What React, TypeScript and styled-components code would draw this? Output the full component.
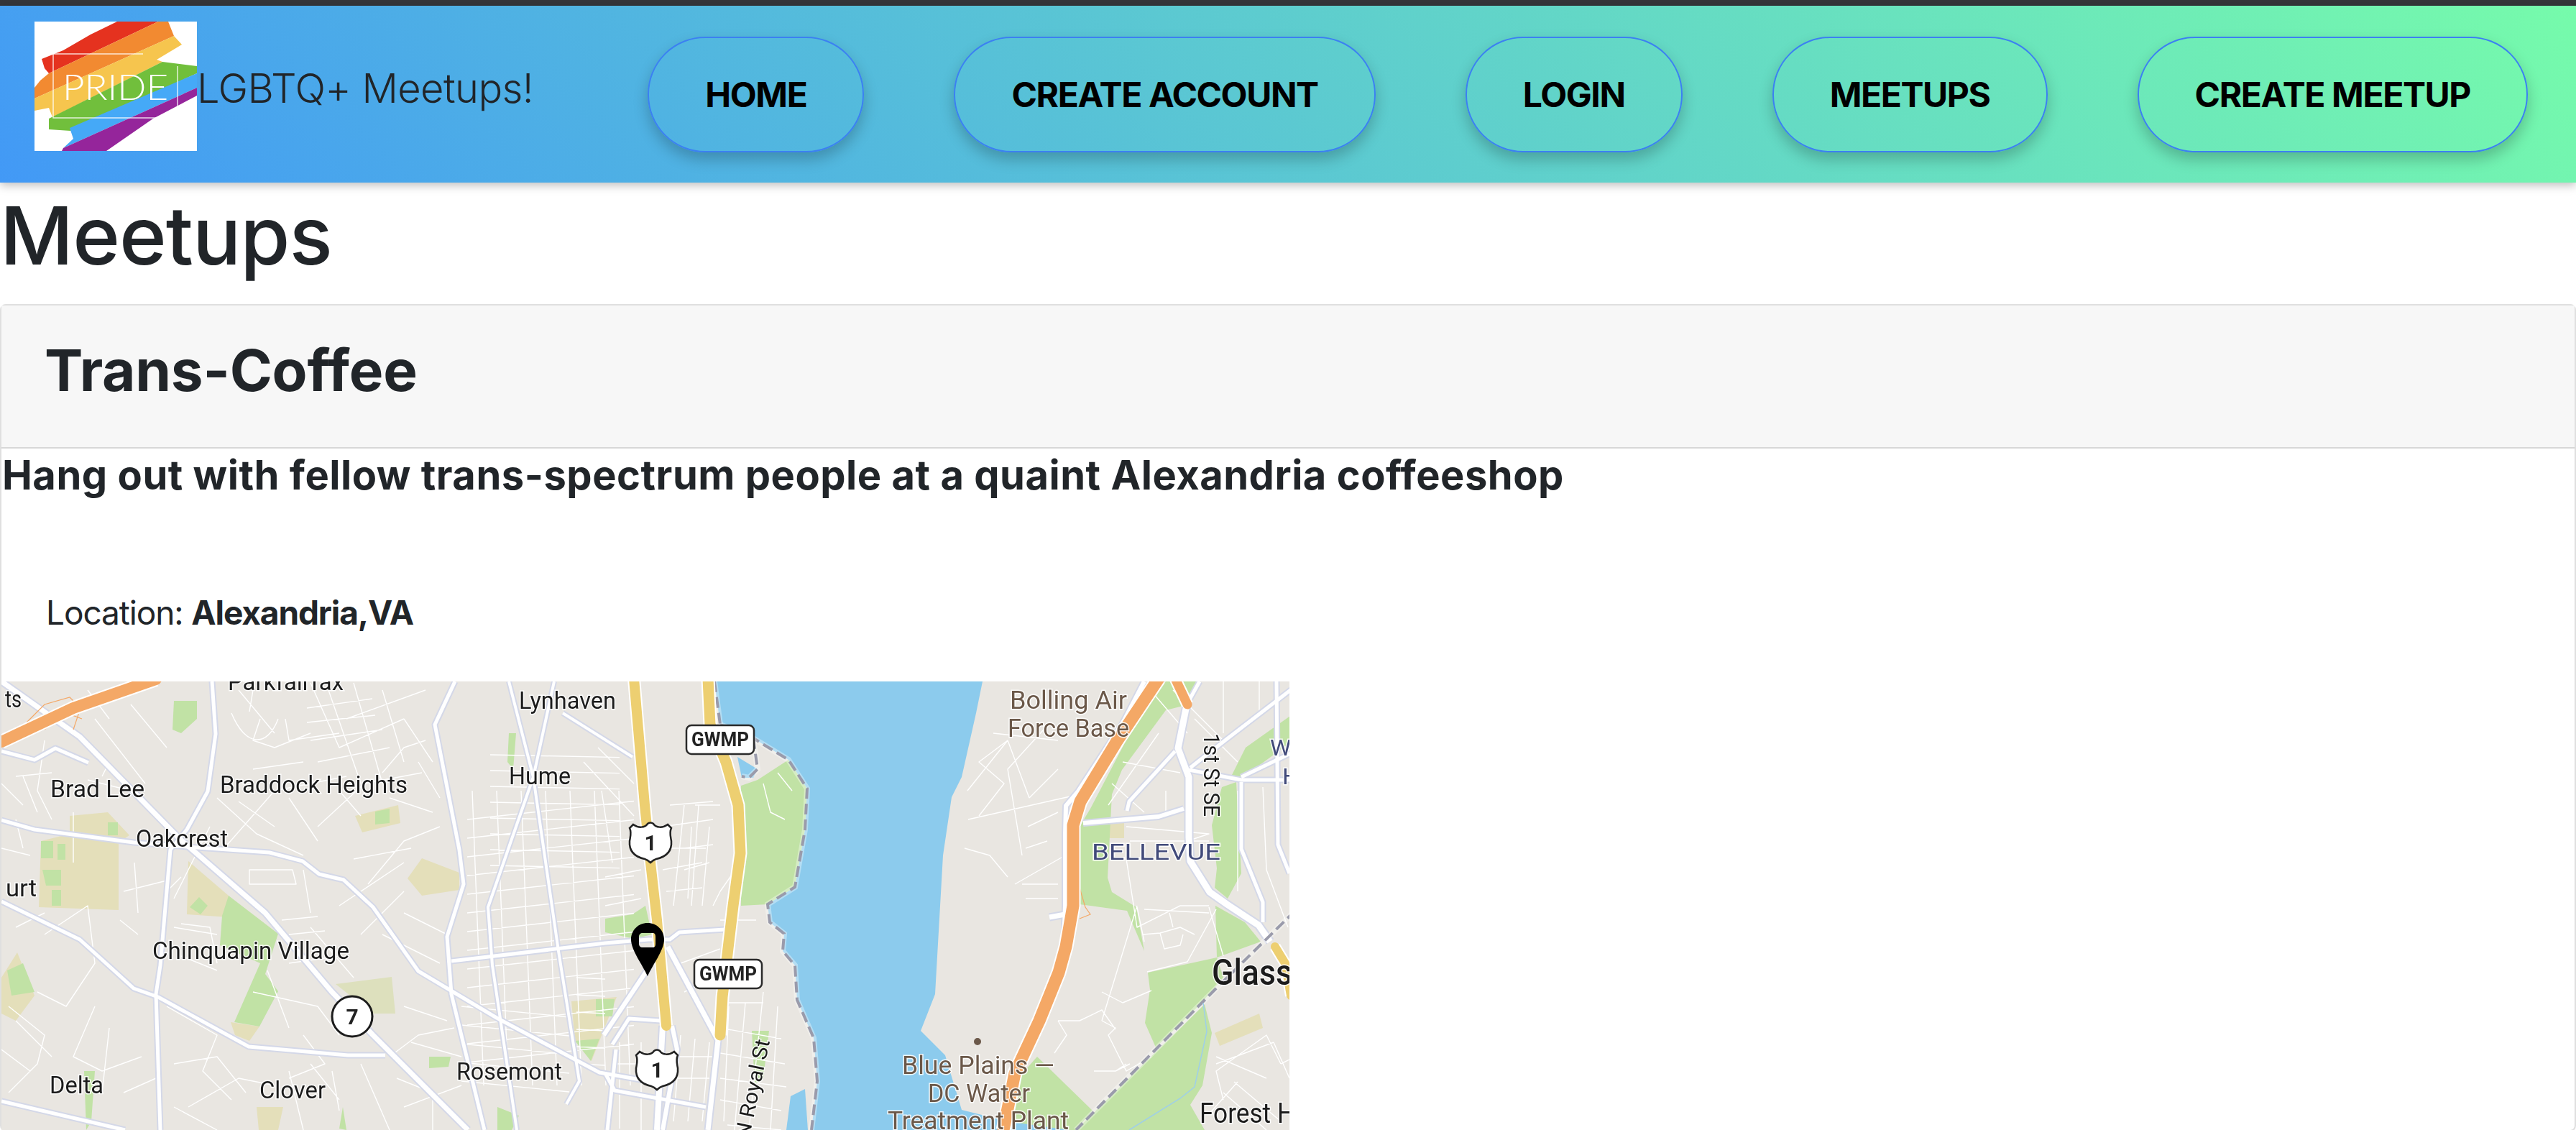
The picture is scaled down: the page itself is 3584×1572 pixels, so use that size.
import { FC } from 'react'
import styled, { createGlobalStyle } from 'styled-components'

const GlobalStyle = createGlobalStyle`
  html, body {
    margin: 0;
    height: 1572px;
    overflow: hidden;
    background: #fff;
    color: #212529;
    font-family: Inter, "Liberation Sans", sans-serif;
  }
  * {
    box-sizing: border-box;
  }
`

const navLinks = ['HOME', 'CREATE ACCOUNT', 'LOGIN', 'MEETUPS', 'CREATE MEETUP']

const Logo: FC = () => (
  <StyledLogo viewBox="0 0 226 180" aria-label="Pride">
    <rect width="226" height="180" fill="#fff" />
    <polygon points="115,0 172,0 20,72 14,65 10,52 40,40 78,18" fill="#e5321f" />
    <polygon points="172,0 186,0 194,20 0,107 0,92 8,82 20,72" fill="#f28a31" />
    <polygon points="194,20 205,32 170,53 178,56 25,133 20,120 0,124 0,107" fill="#f6c54e" />
    <polygon points="178,56 226,62 226,72 50,152 20,150 20,135" fill="#71bf3c" />
    <polygon points="226,72 226,92 40,176 54,163 49,148" fill="#45a9f7" />
    <polygon points="226,92 226,103 165,135 100,180 38,180 40,176" fill="#95259b" />
    <path d="M151 45H26V134H199V62" fill="none" stroke="#fff" strokeOpacity="0.8" strokeWidth="1.5" />
    <LogoText x="39" y="109" textLength="147" lengthAdjust="spacingAndGlyphs">PRIDE</LogoText>
  </StyledLogo>
)

const land: [string, string][] = [
  // sports fields and school grounds go under the parks
  ['#e4dfba', 'M95 1135L148 1130 178 1162 163 1172 163 1266 52 1262 55 1170 95 1160Z'],
  ['#e4dfba', 'M260 1198L316 1246 316 1276 258 1272Z'],
  ['#e4dfba', 'M492 1135L552 1120 555 1145 502 1158Z'],
  ['#e4dfba', 'M565 1222L585 1194 637 1214 637 1238 585 1246Z'],
  ['#e4dfba', 'M0 1360L22 1325 46 1385 20 1420 0 1410Z'],
  ['#e4dfba', 'M319 1422L359 1428 345 1448 325 1440Z'],
  ['#e4dfba', 'M793 1393L856 1387 821 1476 798 1448ZM355 1540H392L385 1572H358Z'],
  ['#e4dfba', 'M1540 1145H1562V1166H1540ZM1688 1437L1750 1410 1755 1430 1695 1455Z'],
  ['#dde0bd', 'M465 1369L543 1359 548 1410 517 1410Z'],
  // parks
  ['#c1e2a5', 'M1029 1093L1052 1085 1095 1057 1121 1097 1118 1154 1104 1234 1066 1258 1029 1260Z'],
  ['#c1e2a5', 'M1620 948H1664L1652 980 1620 988 1559 1071 1545 1105 1539 1221 1545 1241 1579 1262 1590 1323 1566 1267 1500 1258V1150L1515 1125 1570 1020Z'],
  ['#c1e2a5', 'M1698 1095L1718 1088 1725 1215 1706 1250 1688 1235 1691 1208 1684 1148Z'],
  ['#c1e2a5', 'M1711 1080L1731 1040 1800 991V1028L1725 1083Z'],
  ['#c1e2a5', 'M1595 1353L1691 1332 1700 1360 1668 1397 1606 1457 1591 1423 1598 1377Z'],
  ['#c1e2a5', 'M1674 1397L1684 1437 1671 1510 1654 1537 1674 1572H1495Z'],
  ['#c1e2a5', 'M1441 1470L1518 1545 1495 1572H1400L1410 1505Z'],
  ['#c1e2a5', 'M1689 1260L1730 1283 1752 1310 1691 1332Z'],
  ['#c1e2a5', 'M840 1278L878 1272 896 1260 905 1300 880 1306 840 1297Z'],
  ['#c1e2a5', 'M1036 1150L1030 1230 1010 1330 1006 1330 1020 1230 1024 1150Z'],
  ['#c1e2a5', 'M240 975H272L272 1000 250 1020 238 1015Z'],
  ['#c1e2a5', 'M316 1246L385 1299 367 1355 385 1379 359 1428 324 1422 360 1340 304 1315 307 1274Z'],
  ['#c1e2a5', 'M55 1170H72V1194H55ZM78 1174H89V1196H78ZM57 1210H83V1232H62ZM70 1238H83V1260H70ZM148 1144H162V1162H148Z'],
  ['#c1e2a5', 'M520 1129L540 1125 540 1145 520 1147ZM262 1262L275 1248 287 1260 277 1272Z'],
  ['#c1e2a5', 'M8 1350L30 1340 46 1380 14 1385ZM827 1390H853L850 1414H827ZM798 1448L832 1445 820 1476Z'],
  ['#c1e2a5', 'M595 1470H625L622 1484 595 1486ZM470 1570L475 1540 480 1572ZM115 1490H130L125 1560 118 1572Z'],
  ['#c1e2a5', 'M706 1020H716L712 1070 704 1060ZM1044 1434H1068L1060 1500 1048 1510ZM690 1540L720 1552 710 1572H690Z'],
]

const water = [
  'M992 948L1000 1008 1046 1027 1095 1057 1121 1097 1118 1154 1104 1234 1066 1258 1069 1283 1089 1299 1087 1323 1104 1343 1107 1391 1130 1444 1135 1504 1127 1572H1485L1400 1560 1336 1544 1313 1468 1279 1434 1299 1383 1310 1190 1322 1109 1336 1081 1356 992 1365 948Z',
  'M1024 1053L1052 1070 1046 1082H1030Z',
  'M1098 1525L1118 1515 1122 1572H1092Z',
]

const arterials: [string, number][] = [
  ['M0 948L109 1025 247 1166 367 1270 459 1379 517 1440 649 1572', 7],
  ['M293 948L298 1021 287 1101 258 1154 235 1182 221 1343 215 1383 221 1572', 5],
  ['M0 1141L46 1154 184 1172 258 1178 373 1186 419 1198 442 1216 476 1224 517 1262 580 1351 689 1416 832 1492 900 1504', 5],
  ['M0 1254L109 1307 184 1375 218 1387 344 1456 482 1468 534 1468', 5],
  ['M0 1045L46 1057 75 1041 121 1061', 5],
  ['M631 948L603 1008 637 1182 643 1230 620 1303 626 1383 672 1572', 5],
  ['M769 948L740 1081 677 1262 683 1343 717 1572', 4],
  ['M706 948L740 1081 775 1323 804 1504 786 1536', 4],
  ['M626 1337L840 1312 900 1307 930 1307 943 1297 1007 1293', 5],
  ['M781 992L878 1053', 4],
  ['M0 1532L172 1572', 5],
  ['M927 1317L997 1447 983 1572', 7],
  ['M900 1347L838 1440', 6],
  ['M920 1427L912 1572', 8],
  ['M933 1427L940 1460 920 1572', 6],
  ['M850 1453L873 1417 917 1420M855 1460L843 1572M840 1493L853 1517 980 1540', 5],
  ['M1590 948L1559 1008 1498 1101 1481 1121 1480 1161 1480 1260 1478 1320', 6],
  ['M1505 1145L1610 1136 1645 1125', 6],
  ['M1566 1128L1569 1115 1633 1045', 5],
  ['M1649 981L1637 1041 1652 1081 1652 1165 1654 1198 1681 1241 1705 1258 1749 1287 1765 1310', 9],
  ['M1652 1071L1725 1085 1800 1085', 5],
  ['M1654 1068L1705 1028 1800 955', 5],
  ['M1725 1088V1181L1755 1255V1283', 5],
  ['M1774 948L1776 1175 1792 1215', 5],
  ['M1725 1081L1800 1045', 5],
  ['M1667 948L1652 975', 5],
  ['M1480 1272L1458 1276', 7],
]

const minorStreets = [
  'M130 1000L200 1090M60 1030L50 1100 70 1140M330 960L380 1020M430 950L470 1040 560 1000M360 1000L350 1030 380 1040 430 1020',
  'M300 1110L355 1160 420 1190M310 1180L380 1100 480 1080M395 1000L400 1030 470 1020M480 1000L590 960M530 1075L560 1040 590 1030',
  'M440 1150L505 1090 585 1075M510 1230L560 1170 610 1150M490 1195L570 1180M420 1210L430 1270M470 1260L560 1200',
  'M120 1085L180 1100M30 1080L50 1130M0 1180L40 1190M170 1240L230 1225M185 1200L190 1270M230 1240L250 1220',
  'M345 1210H405L410 1230H345ZM390 1280L440 1275M400 1300L450 1295M250 1285L290 1290 300 1340M500 1300L560 1240',
  'M60 1300L120 1260 130 1340 90 1400 50 1380M10 1400L60 1440 50 1480 10 1520M130 1400L100 1470 140 1490 195 1470M150 1430L140 1520',
  'M230 1400L300 1440 280 1490 320 1530M240 1480L300 1470 340 1520M260 1540L330 1500 380 1510M400 1490L420 1572M430 1480L470 1530',
  'M350 1380L440 1400 470 1440M370 1350L400 1430M420 1440L450 1480 400 1500M540 1470L580 1440 630 1430M550 1500L600 1520 600 1572',
  'M500 1480L540 1572M460 1490L470 1545M560 1540L640 1510M290 1150L240 1250M140 1080L150 1060M20 1140L30 1180',
  'M1100 1100L1080 1075M1060 1090L1070 1130 1090 1140',
  'M320 992C340 1040 370 1040 385 1000M345 990L350 960M425 985L516 972M425 1005L520 995M430 1030L530 1015M440 1060L540 1040',
  'M455 960L500 1090M490 950L530 1090M530 960L560 1060M560 1000L600 1060M580 1060L610 1110M540 1110L600 1130',
  'M350 1070L420 1060M330 1115L380 1150M400 1110L440 1170M470 1100L500 1135M120 960L150 1000M180 980L230 1040M20 1080L70 1075',
  'M0 1090L30 1120M100 1200V1130M165 1280L190 1300M20 1290L60 1270M0 1460L40 1490M240 1290L300 1300M250 1330L300 1350',
  'M400 1340L470 1330M430 1290L490 1360M560 1270L620 1300M530 1300L610 1340M560 1400L620 1420M570 1450L640 1470',
  'M1100 1100L1080 1075M20 1420L70 1470M170 1520L215 1500M240 1540L300 1572',
  // east of the river
  'M1380 1020L1470 1030M1345 1140L1500 1105M1344 1100L1400 1030 1430 1110M1400 1030L1360 1060 1395 1090 1360 1135',
  'M1450 1015L1400 1070 1420 1190M1430 1110L1470 1070M1340 1180L1375 1190 1400 1220M1410 1230L1480 1190',
  'M1428 1150L1470 1130M1425 1180L1455 1170M1420 1230H1470M1425 1250H1470',
  'M1590 950L1650 1020M1560 1060L1640 1075M1540 1120L1610 1020M1545 1090L1590 1130M1620 1100V1130',
  'M1630 960L1700 1030M1700 948V1020M1750 948V990M1660 1000L1720 1060',
  'M1565 1150L1680 1160 1650 1170M1570 1170H1680M1565 1195L1580 1290 1640 1260 1680 1260',
  'M1590 1265L1680 1270M1588 1300L1612 1298 1640 1290 1660 1300M1612 1298L1618 1320 1640 1315 1644 1300M1594 1352L1650 1338 1690 1265',
  'M1580 1262L1590 1310M1625 1270L1630 1290M1680 1262L1700 1330M1720 1100V1240M1755 1095L1760 1210 1790 1290',
  'M1531 1420L1580 1260M1531 1380L1560 1395 1600 1378M1531 1420L1550 1430 1540 1440 1565 1490 1600 1470M1550 1490L1570 1480',
  'M1470 1420L1500 1420 1531 1405 1550 1432M1465 1465L1482 1440 1470 1420M1520 1490L1550 1490 1565 1480',
  'M1700 1530L1690 1490 1760 1440 1780 1480M1690 1480L1770 1450M1690 1470L1760 1500M1715 1505L1780 1560M1700 1520L1760 1572M1680 1550L1720 1505',
  'M1780 1480L1800 1470M1770 1450L1792 1500',
  // alexandria grid, east of the parkway
  'M1000 1395H1060M1000 1430L1085 1445M1000 1465L1090 1480M1000 1500L1092 1512M1000 1530L1085 1545M1010 1565L1085 1572',
  'M1012 1400L1005 1560M1035 1395L1020 1572M1060 1380L1040 1572M1080 1400L1070 1572',
  'M1000 1280H1050M1035 1190L1000 1240 990 1260M960 1150L955 1250M985 1150L975 1260M950 1180L990 1175M950 1210L985 1200',
  // between the highways
  'M920 1150L990 1140M920 1180H980M920 1210L975 1200M925 1240L975 1235M930 1120L990 1115M950 1120L935 1260M970 1120L960 1260',
  'M945 1340L1000 1320M950 1380L990 1360M935 1330L985 1420M965 1120L1000 1120',
  'M830 1040L880 1090M835 1100L850 1200M810 1060L880 1135M840 1260L890 1250M840 1220L890 1210',
  'M860 1450V1570M890 1450V1572M850 1480H905M945 1440L935 1560M965 1445L955 1560M985 1450L975 1560M940 1470H990M938 1500H985',
]

const rows = (count: number, x: number, y: number, step: number, len: number, slope: number) =>
  Array.from({ length: count }, (_, i) => `M${x} ${y + step * i}L${x + len} ${y + step * i + len * slope}`).join('')

const columns = (count: number, x: number, step: number, top: number, bottom: number) =>
  Array.from({ length: count }, (_, i) => `M${x + step * i} ${top}L${x + step * i + 16} ${bottom}`).join('')

const gridStreets = [
  rows(14, 648, 1140, 26, 232, -0.11),
  rows(8, 680, 1050, 22, 180, 0.02),
  columns(7, 655, 34, 1100, 1510),
  rows(6, 800, 1360, 24, 40, 0.05),
  rows(5, 640, 1400, 26, 150, 0.1),
]

const boundaries = [
  'M1000 1008L1046 1027 1095 1057 1121 1097 1118 1154 1104 1234 1066 1258 1069 1283 1089 1299 1087 1323 1104 1343 1107 1391 1130 1444 1135 1504 1127 1572',
  'M1046 1027L1052 1070 1040 1082 1030 1080',
  'M992 948L1000 1008',
  'M1800 1267L1688 1377 1495 1572',
]

const thinOrange = [
  'M35 1005L60 980 95 970 110 985 100 1015M25 1020L55 1000 90 990M60 1015L85 990 112 1000M1500 1235L1508 1262 1515 1272 1500 1278',
]

const motorways = [
  { d: 'M0 1032L100 985 215 945', color: '#f4a866', width: 16 },
  { d: 'M1610 944L1552 1031 1501 1115 1491 1148V1260L1481 1317 1471 1353 1444 1420 1410 1493 1394 1572', color: '#f4a866', width: 17 },
  { d: 'M1633 944L1650 980', color: '#f4a866', width: 13 },
  { d: 'M880 944L895 1120 903 1200 912 1280 925 1427', color: '#edcf71', width: 14 },
  { d: 'M983 944L986 1008 1008 1060 1025 1120 1028 1187 1018 1260 1003 1387 1000 1440', color: '#edcf71', width: 15 },
  { d: 'M1772 1317L1786 1340 1794 1385', color: '#edcf71', width: 12 },
]

type PlaceLabel = {
  text: string
  x: number
  y: number
  width: number
  size: number
  color?: string
  rotate?: number
  bold?: boolean
}

const labels: PlaceLabel[] = [
  { text: 'ts', x: 5, y: 984, width: 23, size: 33 },
  { text: 'Parkfairfax', x: 315, y: 960, width: 161, size: 33 },
  { text: 'Lynhaven', x: 720, y: 986, width: 135, size: 33 },
  { text: 'Hume', x: 706, y: 1091, width: 86, size: 33 },
  { text: 'Brad Lee', x: 68, y: 1109, width: 131, size: 33 },
  { text: 'Braddock Heights', x: 304, y: 1103, width: 261, size: 33 },
  { text: 'Oakcrest', x: 187, y: 1178, width: 128, size: 33 },
  { text: 'urt', x: 6, y: 1247, width: 43, size: 33 },
  { text: 'Chinquapin Village', x: 210, y: 1334, width: 274, size: 33 },
  { text: 'Delta', x: 67, y: 1521, width: 75, size: 33 },
  { text: 'Clover', x: 359, y: 1528, width: 92, size: 33 },
  { text: 'Rosemont', x: 633, y: 1502, width: 147, size: 33 },
  { text: 'Bolling Air', x: 1403, y: 986, width: 163, size: 35, color: '#6b5849' },
  { text: 'Force Base', x: 1400, y: 1025, width: 169, size: 35, color: '#6b5849' },
  { text: '1st St SE', x: 1673, y: 1020, width: 116, size: 32, rotate: 90 },
  { text: 'BELLEVUE', x: 1517, y: 1196, width: 179, size: 32, color: '#414a7a' },
  { text: 'WA', x: 1765, y: 1051, width: 50, size: 32, color: '#414a7a' },
  { text: 'H', x: 1782, y: 1091, width: 24, size: 32, color: '#414a7a' },
  { text: 'Blue Plains —', x: 1253, y: 1494, width: 212, size: 35, color: '#6b5849' },
  { text: 'DC Water', x: 1289, y: 1533, width: 142, size: 35, color: '#6b5849' },
  { text: 'Treatment Plant', x: 1233, y: 1571, width: 252, size: 35, color: '#6b5849' },
  { text: 'Glass', x: 1684, y: 1370, width: 112, size: 50, bold: true },
  { text: 'Forest H', x: 1667, y: 1562, width: 133, size: 38 },
  { text: 'N Royal St', x: 1040, y: 1585, width: 140, size: 29, rotate: -78 },
]

const Shield: FC<{ x: number; y: number }> = ({ x, y }) => (
  <g transform={`translate(${x} ${y})`}>
    <ShieldShape d="M-24 -25C-17 -20 -8 -20 -4 -26 -2 -28 2 -28 4 -26 8 -20 17 -20 24 -25L29 -20C26 -14 28 -8 29 -2 30 12 22 20 8 23 4 24 2 26 0 28 -2 26 -4 24 -8 23 -22 20 -30 12 -29 -2 -28 -8 -26 -14 -29 -20Z" />
    <ShieldNumber y="11">1</ShieldNumber>
  </g>
)

const ParkwaySign: FC<{ x: number; y: number }> = ({ x, y }) => (
  <g transform={`translate(${x} ${y})`}>
    <SignPlate width="94" height="40" rx="7" />
    <SignText x="47" y="29" textLength="80" lengthAdjust="spacingAndGlyphs">GWMP</SignText>
  </g>
)

const MapView: FC = () => (
  <StyledMap viewBox="0 948 1792 624" aria-label="Map of Alexandria, VA">
    <rect x="0" y="948" width="1792" height="624" fill="#e9e6e1" />
    {land.map(([color, d], i) => (
      <path key={i} d={d} fill={color} />
    ))}
    {water.map((d, i) => (
      <path key={i} d={d} fill="#8ccbed" />
    ))}
    <MinorStreet d={minorStreets.join('') + gridStreets.join('')} />
    {arterials.map(([d, width], i) => (
      <RoadCasing key={i} d={d} strokeWidth={width + 4} />
    ))}
    {arterials.map(([d, width], i) => (
      <RoadFill key={i} d={d} strokeWidth={width} />
    ))}
    {boundaries.map((d, i) => (
      <g key={i}>
        <BoundaryGlow d={d} />
        <Boundary d={d} />
      </g>
    ))}
    <path d="M1672 1395L1677 1435 1660 1512 1640 1528 1569 1572" fill="none" stroke="#9fcfe8" strokeWidth="1.5" />
    {thinOrange.map((d, i) => (
      <path key={i} d={d} fill="none" stroke="#f4a866" strokeWidth="1.2" />
    ))}
    {motorways.map(({ d, width }, i) => (
      <RoadFill key={i} d={d} strokeWidth={width + 4} />
    ))}
    {motorways.map(({ d, color, width }, i) => (
      <Motorway key={i} d={d} stroke={color} strokeWidth={width} />
    ))}
    <circle cx="1358" cy="1449" r="5" fill="#6b5849" />
    {labels.map(({ text, x, y, width, size, color, rotate, bold }) => (
      <MapLabel
        key={text}
        x={x}
        y={y}
        textLength={width}
        lengthAdjust="spacingAndGlyphs"
        transform={rotate ? `rotate(${rotate} ${x} ${y})` : undefined}
        $size={size}
        $color={color}
        $bold={bold}
      >
        {text}
      </MapLabel>
    ))}
    <Shield x={903} y={1172} />
    <Shield x={912} y={1488} />
    <ParkwaySign x={953} y={1009} />
    <ParkwaySign x={964} y={1335} />
    <RouteCircle cx="488" cy="1414" r="28" />
    <ShieldNumber x="488" y="1425">7</ShieldNumber>
    <path
      fillRule="evenodd"
      d="M899 1284C886 1284 876 1294 876 1307 876 1322 892 1342 899 1358 906 1342 922 1322 922 1307 922 1294 912 1284 899 1284ZM892 1298H906C909 1298 910 1300 910 1303V1313C910 1316 909 1318 906 1318H892C889 1318 887 1316 887 1313V1303C887 1300 889 1298 892 1298Z"
    />
  </StyledMap>
)

export default function App() {
  return (
    <>
      <GlobalStyle />
      <BrowserEdge />
      <NavBar>
        <Brand>
          <Logo />
          <BrandName>LGBTQ+ Meetups!</BrandName>
        </Brand>
        <NavLinks>
          {navLinks.map((link) => (
            <NavButton key={link}>{link}</NavButton>
          ))}
        </NavLinks>
      </NavBar>
      <PageTitle>Meetups</PageTitle>
      <Card>
        <CardHeader>
          <CardTitle>Trans-Coffee</CardTitle>
        </CardHeader>
        <Description>Hang out with fellow trans-spectrum people at a quaint Alexandria coffeeshop</Description>
        <LocationLine>
          Location: <strong>Alexandria,VA</strong>
        </LocationLine>
        <MapView />
      </Card>
    </>
  )
}

const BrowserEdge = styled.div`
  height: 8px;
  background: #35363a;
`

const NavBar = styled.header`
  position: relative;
  display: flex;
  align-items: center;
  justify-content: space-between;
  height: 246px;
  padding: 0 67px 0 48px;
  background: linear-gradient(45deg, #4299f6, #76fbab);
  box-shadow: 0 4px 12px rgba(0, 0, 0, 0.25);
`

const Brand = styled.div`
  display: flex;
  align-items: center;
  margin-top: -22px;
`

const StyledLogo = styled.svg`
  display: block;
  width: 226px;
  height: 180px;
`

const LogoText = styled.text`
  fill: #fff;
  font-family: Lato, sans-serif;
  font-size: 50px;
  font-weight: 300;
`

const BrandName = styled.span`
  margin-top: 6px;
  font-size: 56px;
  font-weight: 300;
  letter-spacing: -0.6px;
  color: #212529;
`

const NavLinks = styled.nav`
  display: flex;
  align-items: center;
  gap: 125px;
`

const NavButton = styled.a`
  display: flex;
  align-items: center;
  height: 161px;
  padding: 0 78px;
  border: 2px solid #3b80f2;
  border-radius: 80px;
  box-shadow: 0 10px 20px rgba(0, 0, 0, 0.22);
  color: #000;
  font-size: 48px;
  font-weight: 700;
  letter-spacing: -1.4px;
  white-space: nowrap;
`

const PageTitle = styled.h1`
  margin: 6px 0 29px;
  font-size: 112px;
  font-weight: 450;
  letter-spacing: -1px;
  line-height: 134px;
`

const Card = styled.section`
  border: 2px solid rgba(0, 0, 0, 0.125);
  border-radius: 8px;
`

const CardHeader = styled.div`
  padding: 42px 60px 59px;
  background: #f7f7f7;
  border-bottom: 2px solid rgba(0, 0, 0, 0.125);
`

const CardTitle = styled.h2`
  margin: 0;
  font-size: 80px;
  font-weight: 700;
  letter-spacing: -0.2px;
  line-height: 96px;
`

const Description = styled.h3`
  margin: 4px 0 130px 1px;
  font-size: 56px;
  font-weight: 700;
  letter-spacing: 0.53px;
  line-height: 67px;
`

const LocationLine = styled.p`
  margin: 0 0 68px 62px;
  font-size: 46px;
  letter-spacing: -1.1px;
  line-height: 55px;

  strong {
    font-weight: 700;
  }
`

const StyledMap = styled.svg`
  display: block;
  width: 1792px;
  height: 624px;
  filter: blur(0.5px);
`

const MinorStreet = styled.path`
  fill: none;
  stroke: #fff;
  stroke-width: 1.4;
  stroke-linejoin: round;
`

const RoadCasing = styled.path`
  fill: none;
  stroke: #d4d8e8;
  stroke-linejoin: round;
`

const RoadFill = styled.path`
  fill: none;
  stroke: #fff;
  stroke-linejoin: round;
`

const Motorway = styled.path`
  fill: none;
  stroke-linecap: round;
  stroke-linejoin: round;
`

const Boundary = styled.path`
  fill: none;
  stroke: #9a9bab;
  stroke-width: 4;
  stroke-dasharray: 15 7;
`

const BoundaryGlow = styled.path`
  fill: none;
  stroke: #fff;
  stroke-opacity: 0.35;
  stroke-width: 8;
`

const MapLabel = styled.text<{ $size: number; $color?: string; $bold?: boolean }>`
  fill: ${({ $color }) => $color ?? '#1c1c1c'};
  stroke: #fff;
  stroke-opacity: 0.85;
  stroke-width: 3px;
  paint-order: stroke;
  font-family: Roboto, "Open Sans", sans-serif;
  font-size: ${({ $size }) => $size}px;
  font-weight: ${({ $bold }) => ($bold ? 500 : 400)};
`

const ShieldShape = styled.path`
  fill: #fff;
  stroke: #222;
  stroke-width: 2.5;
`

const ShieldNumber = styled.text`
  fill: #222;
  font-family: Roboto, sans-serif;
  font-size: 30px;
  font-weight: 700;
  text-anchor: middle;
`

const SignPlate = styled.rect`
  fill: #fff;
  stroke: #2a2a2a;
  stroke-width: 2.5;
`

const SignText = styled.text`
  fill: #222;
  font-family: Roboto, sans-serif;
  font-size: 27px;
  font-weight: 700;
  text-anchor: middle;
`

const RouteCircle = styled.circle`
  fill: #fff;
  stroke: #1c1c1c;
  stroke-width: 3;
`
